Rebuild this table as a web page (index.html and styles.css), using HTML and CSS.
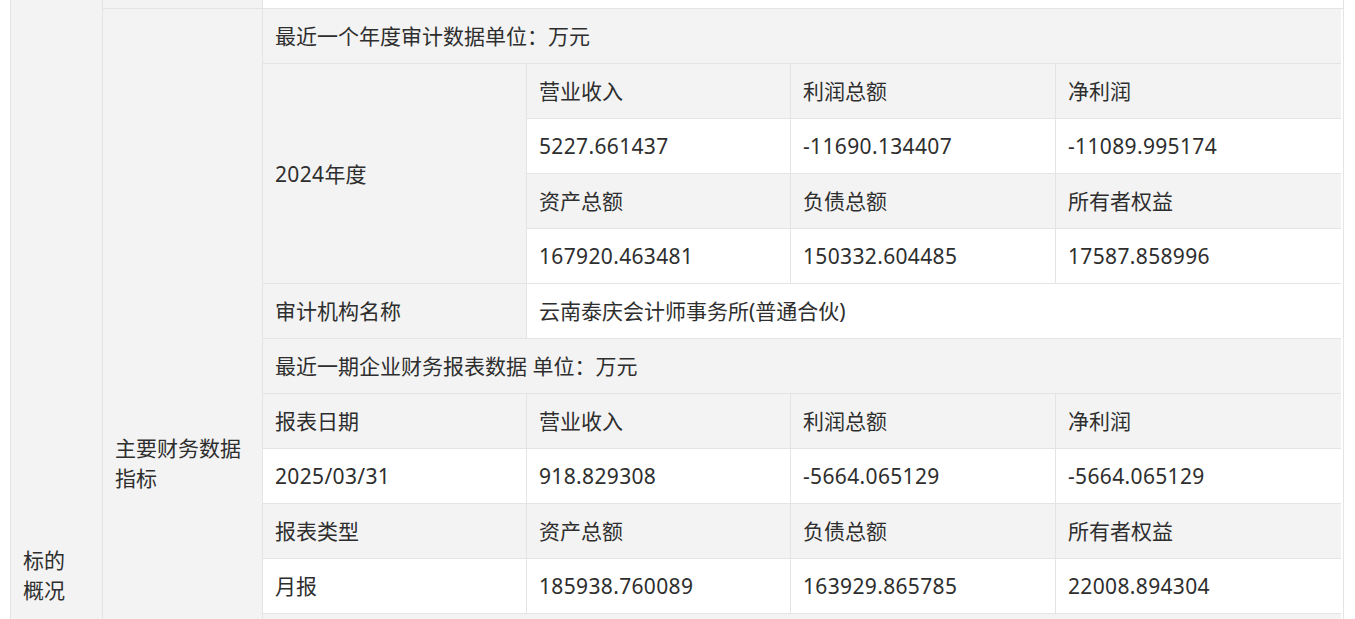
FILE: index.html
```html
<!DOCTYPE html>
<html lang="zh-CN">
<head>
<meta charset="utf-8">
<title>标的概况</title>
<link rel="stylesheet" href="styles.css">
</head>
<body>
<div class="viewport">
  <table class="outer">
    <colgroup>
      <col class="c1"><col class="c2"><col class="c3">
    </colgroup>
    <tr class="stub">
      <td class="cat" rowspan="2"><div class="cat-text">标的概况</div></td>
      <td class="sub stub-cell"></td>
      <td class="body stub-cell white"></td>
    </tr>
    <tr>
      <td class="sub"><div class="sub-text">主要财务数据指标</div></td>
      <td class="body">
        <table class="inner">
          <colgroup>
            <col class="ia"><col class="ib"><col class="ic"><col class="id">
          </colgroup>
          <tr class="gray"><td colspan="4" class="last">最近一个年度审计数据单位：万元</td></tr>
          <tr class="gray">
            <td rowspan="4" class="gray"><span class="num">2024</span>年度</td>
            <td>营业收入</td><td>利润总额</td><td class="last">净利润</td>
          </tr>
          <tr class="white"><td class="num">5227.661437</td><td class="num">-11690.134407</td><td class="num last">-11089.995174</td></tr>
          <tr class="gray"><td>资产总额</td><td>负债总额</td><td class="last">所有者权益</td></tr>
          <tr class="white"><td class="num">167920.463481</td><td class="num">150332.604485</td><td class="num last">17587.858996</td></tr>
          <tr>
            <td class="gray">审计机构名称</td>
            <td colspan="3" class="white last">云南泰庆会计师事务所(普通合伙)</td>
          </tr>
          <tr class="gray"><td colspan="4" class="last">最近一期企业财务报表数据 单位：万元</td></tr>
          <tr class="gray"><td>报表日期</td><td>营业收入</td><td>利润总额</td><td class="last">净利润</td></tr>
          <tr class="white"><td class="num">2025/03/31</td><td class="num">918.829308</td><td class="num">-5664.065129</td><td class="num last">-5664.065129</td></tr>
          <tr class="gray"><td>报表类型</td><td>资产总额</td><td>负债总额</td><td class="last">所有者权益</td></tr>
          <tr class="white"><td>月报</td><td class="num">185938.760089</td><td class="num">163929.865785</td><td class="num last">22008.894304</td></tr>
          <tr class="gray"><td colspan="4" class="last">&nbsp;</td></tr>
        </table>
      </td>
    </tr>
  </table>
</div>
</body>
</html>
```
FILE: styles.css
```css
html, body {
  margin: 0;
  padding: 0;
  background: #ffffff;
}

body {
  font-family: "Noto Sans", "Noto Sans CJK SC", sans-serif;
  font-size: 21px;
  line-height: 30px;
  color: #2e2e2e;
}

.viewport {
  height: 619px;
  overflow: hidden;
  padding-left: 10px;
  width: 1334px;
}

.outer {
  border-collapse: separate;
  border-spacing: 0;
  border-left: 1px solid #e4e4e4;
  width: 1334px;
  table-layout: fixed;
}

.c1 { width: 92px; }
.c2 { width: 160px; }
.c3 { width: 1081px; }

.outer > tbody > tr > td {
  border-right: 1px solid #e4e4e4;
  border-bottom: 1px solid #e4e4e4;
  background: #f3f3f3;
  padding: 0;
  vertical-align: top;
}

.outer > tbody > tr > td.white {
  background: #ffffff;
}

.outer > tbody > tr > td.cat {
  border-bottom: none;
}

.stub-cell {
  height: 8px;
}

.cat-text {
  width: 44px;
  padding: 545px 12px 0 12px;
}

.sub-text {
  padding: 424px 12px 0 12px;
}

.outer > tbody > tr > td.body {
  background: #ffffff;
}

.inner {
  border-collapse: separate;
  border-spacing: 0;
  width: 1078px;
  table-layout: fixed;
}

.ia { width: 264px; }
.ib { width: 264px; }
.ic { width: 265px; }
.id { width: 285px; }

.inner td {
  padding: 12px;
  border-right: 1px solid #e4e4e4;
  border-bottom: 1px solid #e4e4e4;
  vertical-align: middle;
  white-space: nowrap;
}

.inner td.last {
  border-right: none;
}

.inner tr.gray td,
.inner td.gray {
  background: #f3f3f3;
}

.inner tr.white td,
.inner td.white {
  background: #ffffff;
}

.num {
  letter-spacing: 0.35px;
}
```
